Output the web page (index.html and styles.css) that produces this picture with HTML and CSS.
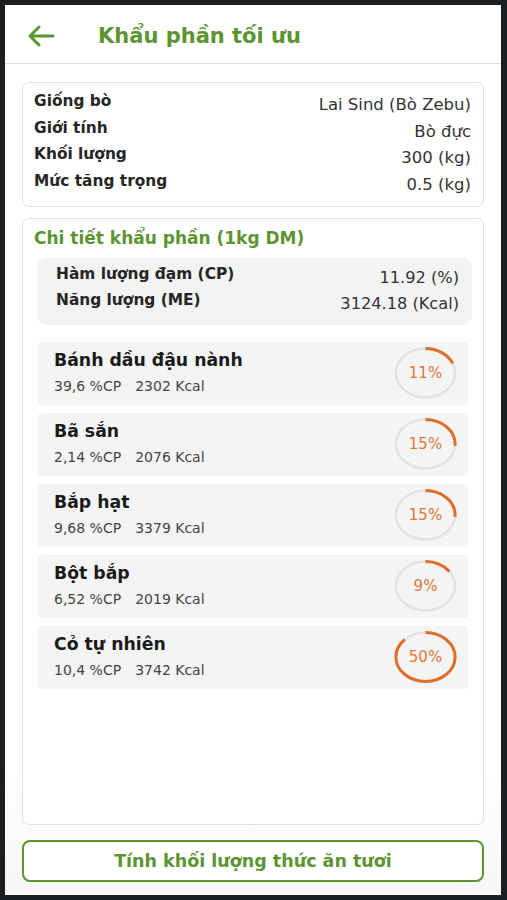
FILE: index.html
```html
<!DOCTYPE html>
<html lang="vi">
<head>
    <meta charset="UTF-8">
    <meta name="viewport" content="width=device-width, initial-scale=1.0">
    <title>Khẩu phần tối ưu</title>
    <link rel="stylesheet" href="styles.css">
</head>
<body>
    <div class="screen">
        <header class="topbar">
            <svg class="back" viewBox="0 0 28 22" width="28" height="22">
                <path d="M26 11H3M12 2L3 11l9 9" fill="none" stroke="#5c9432" stroke-width="3" stroke-linecap="round" stroke-linejoin="round"/>
            </svg>
            <h1>Khẩu phần tối ưu</h1>
        </header>

        <main class="content">
            <section class="card info">
                <div class="row"><span class="label">Giống bò</span><span class="value">Lai Sind (Bò Zebu)</span></div>
                <div class="row"><span class="label">Giới tính</span><span class="value">Bò đực</span></div>
                <div class="row"><span class="label">Khối lượng</span><span class="value">300 (kg)</span></div>
                <div class="row"><span class="label">Mức tăng trọng</span><span class="value">0.5 (kg)</span></div>
            </section>

            <section class="card detail">
                <h2>Chi tiết khẩu phần (1kg DM)</h2>
                <div class="summary">
                    <div class="row"><span class="label">Hàm lượng đạm (CP)</span><span class="value">11.92 (%)</span></div>
                    <div class="row"><span class="label">Năng lượng (ME)</span><span class="value">3124.18 (Kcal)</span></div>
                </div>

                <ul class="feeds">
                    <li class="feed">
                        <div class="feed-text">
                            <div class="feed-name">Bánh dầu đậu nành</div>
                            <div class="feed-sub"><span>39,6 %CP</span><span>2302 Kcal</span></div>
                        </div>
                        <div class="ring">
                            <svg viewBox="0 0 100 100" preserveAspectRatio="none">
                                <circle class="track" cx="50" cy="50" r="47"/>
                                <circle class="arc" cx="50" cy="50" r="47" pathLength="100" stroke-dasharray="11 100" transform="rotate(-90 50 50)"/>
                            </svg>
                            <span>11%</span>
                        </div>
                    </li>
                    <li class="feed">
                        <div class="feed-text">
                            <div class="feed-name">Bã sắn</div>
                            <div class="feed-sub"><span>2,14 %CP</span><span>2076 Kcal</span></div>
                        </div>
                        <div class="ring">
                            <svg viewBox="0 0 100 100" preserveAspectRatio="none">
                                <circle class="track" cx="50" cy="50" r="47"/>
                                <circle class="arc" cx="50" cy="50" r="47" pathLength="100" stroke-dasharray="15 100" transform="rotate(-90 50 50)"/>
                            </svg>
                            <span>15%</span>
                        </div>
                    </li>
                    <li class="feed">
                        <div class="feed-text">
                            <div class="feed-name">Bắp hạt</div>
                            <div class="feed-sub"><span>9,68 %CP</span><span>3379 Kcal</span></div>
                        </div>
                        <div class="ring">
                            <svg viewBox="0 0 100 100" preserveAspectRatio="none">
                                <circle class="track" cx="50" cy="50" r="47"/>
                                <circle class="arc" cx="50" cy="50" r="47" pathLength="100" stroke-dasharray="15 100" transform="rotate(-90 50 50)"/>
                            </svg>
                            <span>15%</span>
                        </div>
                    </li>
                    <li class="feed">
                        <div class="feed-text">
                            <div class="feed-name">Bột bắp</div>
                            <div class="feed-sub"><span>6,52 %CP</span><span>2019 Kcal</span></div>
                        </div>
                        <div class="ring">
                            <svg viewBox="0 0 100 100" preserveAspectRatio="none">
                                <circle class="track" cx="50" cy="50" r="47"/>
                                <circle class="arc" cx="50" cy="50" r="47" pathLength="100" stroke-dasharray="9 100" transform="rotate(-90 50 50)"/>
                            </svg>
                            <span>9%</span>
                        </div>
                    </li>
                    <li class="feed">
                        <div class="feed-text">
                            <div class="feed-name">Cỏ tự nhiên</div>
                            <div class="feed-sub"><span>10,4 %CP</span><span>3742 Kcal</span></div>
                        </div>
                        <div class="ring">
                            <svg viewBox="0 0 100 100" preserveAspectRatio="none">
                                <circle class="track" cx="50" cy="50" r="47"/>
                                <circle class="arc" cx="50" cy="50" r="47" pathLength="100" stroke-dasharray="50 100" transform="rotate(-90 50 50)"/>
                            </svg>
                            <span>50%</span>
                        </div>
                    </li>
                </ul>
            </section>

            <button class="action">Tính khối lượng thức ăn tươi</button>
        </main>
    </div>
</body>
</html>
```

FILE: styles.css
```css
html {
    font-size: 15px;
}

body {
    margin: 0;
    padding: 5px 6px 5px 5px;
    background-color: #1c2022;
    font-family: "DejaVu Sans", "Liberation Sans", sans-serif;
    color: #222;
}

.screen {
    height: 890px;
    background-color: #fff;
    display: flex;
    flex-direction: column;
}

.topbar {
    height: 58px;
    display: flex;
    align-items: center;
    border-bottom: 1px solid #dcdcdc;
    box-shadow: 0 1px 2px rgba(0, 0, 0, 0.06);
}

.back {
    margin-left: 22px;
    margin-top: 4px;
}

.topbar h1 {
    margin: 4px 0 0 43px;
    font-size: 21px;
    font-weight: bold;
    color: #5c9432;
}

.content {
    flex: 1;
    display: flex;
    flex-direction: column;
    padding: 18px 17px 13px;
    background: linear-gradient(#fff 85%, #f6f6f6);
}

.card {
    border: 1.5px solid #e2e2e2;
    border-radius: 7px;
    background-color: #fff;
}

.row {
    display: flex;
    justify-content: space-between;
    align-items: flex-start;
}

.label {
    font-size: 15.4px;
    font-weight: bold;
    color: #262626;
}

.value {
    font-size: 16.5px;
    color: #333;
    padding-top: 3px;
}

.info {
    padding: 9px 12px 12px 11px;
    display: flex;
    flex-direction: column;
    gap: 4px;
}

.info .row {
    height: 22.5px;
}

.detail {
    flex: 1;
    margin-top: 11px;
    padding: 9px 11px 0 11px;
}

.detail h2 {
    margin: 0 0 10px;
    font-size: 17px;
    font-weight: bold;
    color: #5c9432;
}

.summary {
    margin-left: 3px;
    background-color: #f3f3f3;
    border-radius: 9px;
    padding: 7px 13px 12px 19px;
    display: flex;
    flex-direction: column;
    gap: 4px;
}

.summary .row {
    height: 22px;
}

.summary .value {
    font-size: 16.2px;
}

.feeds {
    list-style: none;
    margin: 17px 4px 0 4px;
    padding: 0;
    display: flex;
    flex-direction: column;
    gap: 9px;
}

.feed {
    height: 62px;
    background-color: #f4f4f4;
    border-radius: 4px;
    box-shadow: 0 1px 1px rgba(0, 0, 0, 0.05);
    display: flex;
    align-items: center;
    justify-content: space-between;
    padding: 0 11px 0 16px;
}

.feed-name {
    font-size: 17.3px;
    font-weight: bold;
    color: #1a1a1a;
    margin-top: -2px;
}

.feed-sub {
    font-size: 14px;
    color: #444;
    margin-top: 8px;
    display: flex;
    gap: 14px;
}

.ring {
    width: 63px;
    height: 52px;
    position: relative;
    display: flex;
    align-items: center;
    justify-content: center;
}

.ring svg {
    position: absolute;
    inset: 0;
    width: 100%;
    height: 100%;
    overflow: visible;
}

.ring .track {
    fill: none;
    stroke: #e2e2e2;
    stroke-width: 2.5;
    vector-effect: non-scaling-stroke;
}

.ring .arc {
    fill: none;
    stroke: #e06d2a;
    stroke-width: 3;
    vector-effect: non-scaling-stroke;
}

.ring span {
    position: relative;
    font-size: 15px;
    color: #e07838;
}

.action {
    margin-top: 15px;
    height: 42px;
    border: 2px solid #5c9432;
    border-radius: 8px;
    background-color: #fff;
    font-family: inherit;
    font-size: 17.5px;
    font-weight: bold;
    color: #5c9432;
}
```
